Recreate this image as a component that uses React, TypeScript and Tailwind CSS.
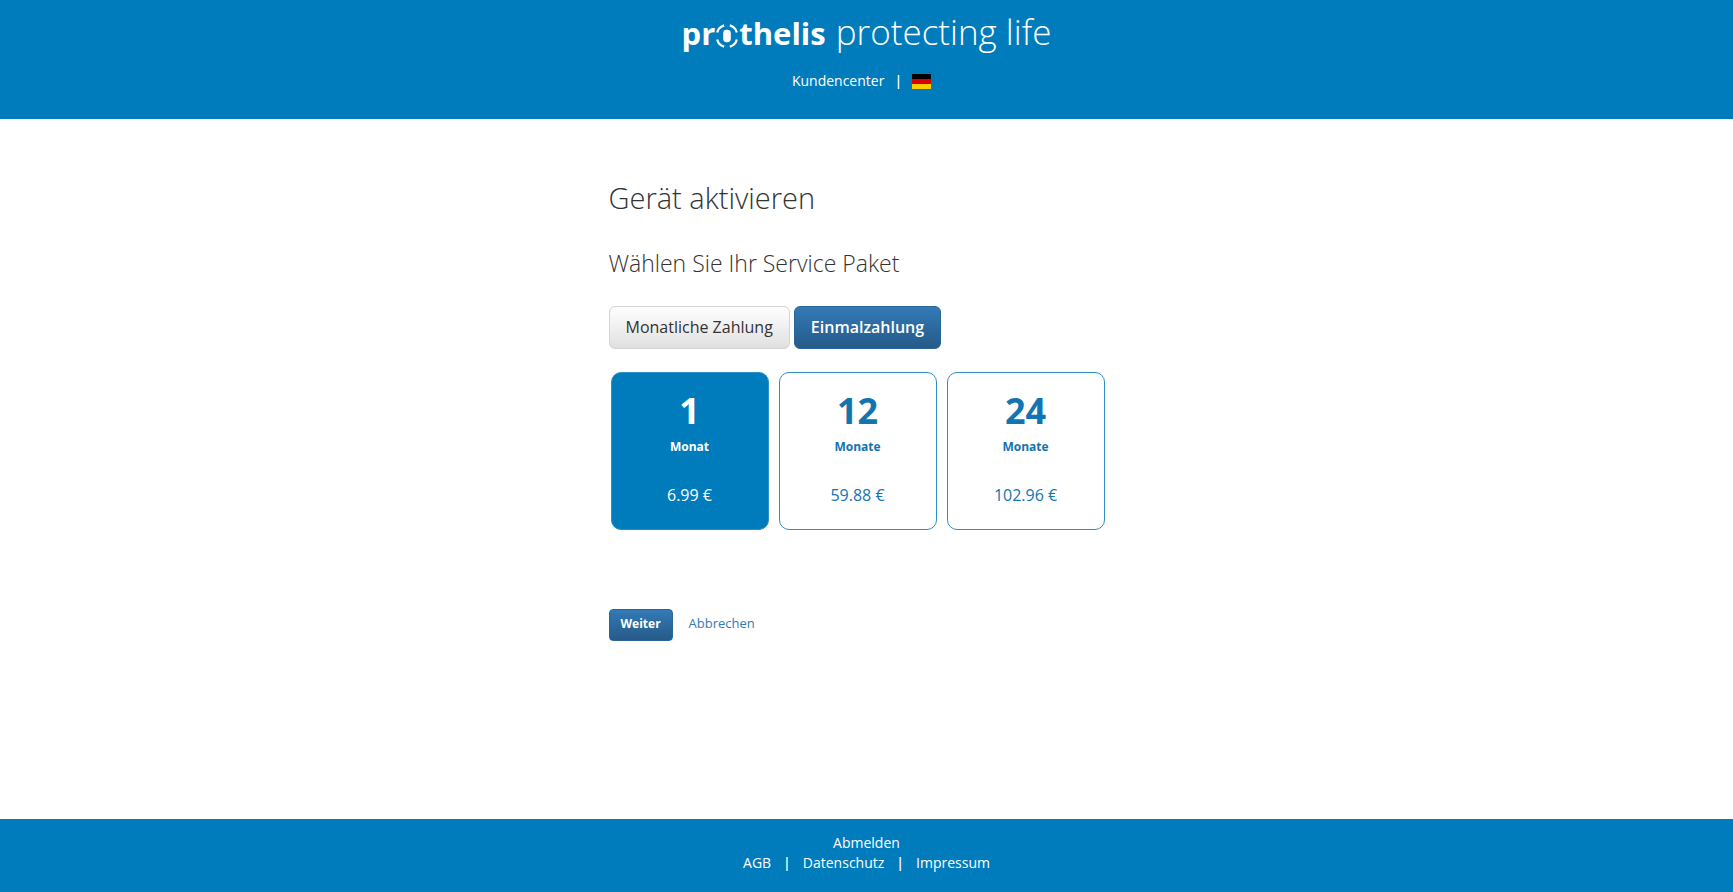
import type { ReactNode } from 'react';
import { useState } from 'react';
import clsx from 'clsx';

type Plan = {
  months: number;
  unit: string;
  price: string;
};

const PLANS: Plan[] = [
  { months: 1, unit: 'Monat', price: '6.99 €' },
  { months: 12, unit: 'Monate', price: '59.88 €' },
  { months: 24, unit: 'Monate', price: '102.96 €' },
];

function LogoMark() {
  return (
    <svg viewBox="0 -6 24 32" className="h-8 w-6" fill="none" aria-hidden="true">
      <g stroke="currentColor" strokeWidth="2.2">
        <path d="M2.2 9.6C3 6.2 5.6 3.4 9.2 2.4" />
        <path d="M14.8 2.4C18.4 3.4 21 6.2 21.8 9.6" />
        <path d="M21.8 16.4C21 19.8 18.4 22.6 14.8 23.6" />
        <path d="M9.2 23.6C5.6 22.6 3 19.8 2.2 16.4" />
      </g>
      <rect x="8.2" y="6.8" width="7.6" height="12.4" rx="3.4" fill="currentColor" />
    </svg>
  );
}

function GermanFlag() {
  return (
    <svg viewBox="0 0 19 15" className="h-[15px] w-[19px]" aria-hidden="true">
      <rect width="19" height="5" fill="#000" />
      <rect y="5" width="19" height="5" fill="#d00" />
      <rect y="10" width="19" height="5" fill="#ffce00" />
    </svg>
  );
}

function Header() {
  return (
    <header className="flex h-[119px] flex-col items-center bg-[#007cbd] pt-2.5 text-white">
      <div className="flex items-baseline gap-2.5 leading-[44px]">
        <div className="flex items-center text-[31px] font-bold">
          <span>pr</span>
          <LogoMark />
          <span>thelis</span>
        </div>
        <span className="text-[35px] font-light">protecting life</span>
      </div>
      <nav className="mt-3.5 mr-2.5 flex items-center gap-2.5 text-sm leading-6">
        <a href="#kundencenter">Kundencenter</a>
        <span className="font-semibold">|</span>
        <a href="#sprache" aria-label="Deutsch">
          <GermanFlag />
        </a>
      </nav>
    </header>
  );
}

type PaymentButtonProps = {
  active: boolean;
  onClick: () => void;
  children: ReactNode;
};

function PaymentButton({ active, onClick, children }: PaymentButtonProps) {
  return (
    <button
      type="button"
      aria-pressed={active}
      onClick={onClick}
      className={clsx(
        'h-[43px] rounded-md border px-4 pb-0.5 text-base',
        active
          ? 'border-[#2b669a] bg-linear-to-b from-[#337ab7] to-[#265a88] font-semibold text-white'
          : 'border-[#d4d4d4] bg-linear-to-b from-white to-[#e0e0e0] text-[#333]',
      )}
    >
      {children}
    </button>
  );
}

type PlanCardProps = {
  plan: Plan;
  selected: boolean;
  onSelect: () => void;
};

function PlanCard({ plan, selected, onSelect }: PlanCardProps) {
  return (
    <button
      type="button"
      aria-pressed={selected}
      onClick={onSelect}
      className={clsx(
        'flex aspect-square flex-1 flex-col items-center rounded-[10px] border border-[#2f8fc4] pt-4',
        selected ? 'bg-[#007cbd] text-white' : 'bg-white text-[#1274b0]',
      )}
    >
      <span className="text-4xl leading-[44px] font-bold">{plan.months}</span>
      <span className="mt-1 text-xs leading-5 font-bold">{plan.unit}</span>
      <span className="mt-[26px] text-base leading-6">{plan.price}</span>
    </button>
  );
}

function Footer() {
  return (
    <footer className="flex h-[73px] flex-col items-center bg-[#007cbd] pt-3.5 text-sm leading-5 text-white">
      <a href="#abmelden">Abmelden</a>
      <nav className="flex gap-3">
        <a href="#agb">AGB</a>
        <span className="font-semibold">|</span>
        <a href="#datenschutz">Datenschutz</a>
        <span className="font-semibold">|</span>
        <a href="#impressum">Impressum</a>
      </nav>
    </footer>
  );
}

export default function App() {
  const [payment, setPayment] = useState<'monthly' | 'once'>('once');
  const [months, setMonths] = useState(1);

  return (
    <div className="flex min-h-screen flex-col bg-white font-['Open_Sans','Noto_Sans',sans-serif] text-[#333]">
      <Header />
      <main className="mx-auto w-full max-w-[516px] grow pt-[59px]">
        <h1 className="text-[29px] leading-10 font-light">Gerät aktivieren</h1>
        <h2 className="mt-[29px] text-[23px] leading-8 font-light">Wählen Sie Ihr Service Paket</h2>
        <div className="mt-[27px] flex gap-1">
          <PaymentButton active={payment === 'monthly'} onClick={() => setPayment('monthly')}>
            Monatliche Zahlung
          </PaymentButton>
          <PaymentButton active={payment === 'once'} onClick={() => setPayment('once')}>
            Einmalzahlung
          </PaymentButton>
        </div>
        <div className="mt-[23px] mr-5 ml-0.5 flex gap-2.5">
          {PLANS.map((plan) => (
            <PlanCard
              key={plan.months}
              plan={plan}
              selected={plan.months === months}
              onSelect={() => setMonths(plan.months)}
            />
          ))}
        </div>
        <div className="mt-[79px] flex items-center gap-4">
          <button
            type="button"
            className="h-8 rounded border border-[#2b669a] bg-linear-to-b from-[#337ab7] to-[#265a88] px-[11px] pb-0.5 text-xs font-bold text-white"
          >
            Weiter
          </button>
          <a href="#abbrechen" className="pb-0.5 text-[13px] text-[#337ab7]">
            Abbrechen
          </a>
        </div>
      </main>
      <Footer />
    </div>
  );
}
